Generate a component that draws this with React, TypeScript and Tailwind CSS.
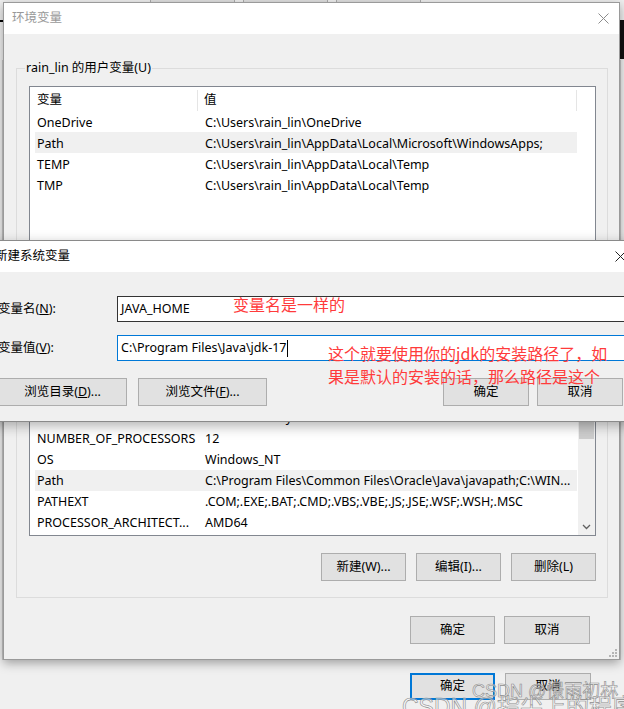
import React from 'react'

const ui = "font-['Noto_Sans','Noto_Sans_CJK_SC',sans-serif]"

type Row = { name: string; value: string; selected?: boolean }

const userVars: Row[] = [
  { name: 'OneDrive', value: 'C:\\Users\\rain_lin\\OneDrive' },
  { name: 'Path', value: 'C:\\Users\\rain_lin\\AppData\\Local\\Microsoft\\WindowsApps;', selected: true },
  { name: 'TEMP', value: 'C:\\Users\\rain_lin\\AppData\\Local\\Temp' },
  { name: 'TMP', value: 'C:\\Users\\rain_lin\\AppData\\Local\\Temp' },
]

const systemVars: Row[] = [
  { name: 'asl.log', value: 'Destination=file' },
  { name: 'ComSpec', value: 'C:\\Windows\\system32\\cmd.exe' },
  { name: 'DriverData', value: 'C:\\Windows\\System32\\Drivers\\DriverData' },
  { name: 'NUMBER_OF_PROCESSORS', value: '12' },
  { name: 'OS', value: 'Windows_NT' },
  { name: 'Path', value: 'C:\\Program Files\\Common Files\\Oracle\\Java\\javapath;C:\\WIN...', selected: true },
  { name: 'PATHEXT', value: '.COM;.EXE;.BAT;.CMD;.VBS;.VBE;.JS;.JSE;.WSF;.WSH;.MSC' },
  { name: 'PROCESSOR_ARCHITECT...', value: 'AMD64' },
]

function CloseX({ color = '#6b6b6b' }: { color?: string }) {
  return (
    <svg width="11" height="11" viewBox="0 0 11 11">
      <path d="M0.5 0.5 L10.5 10.5 M10.5 0.5 L0.5 10.5" stroke={color} strokeWidth="1" fill="none" />
    </svg>
  )
}

function Button({ children, className = '' }: { children: React.ReactNode; className?: string }) {
  return (
    <div
      className={`h-[28px] flex items-center justify-center bg-[#e1e1e1] border border-[#adadad] text-black ${className}`}
    >
      {children}
    </div>
  )
}

function VarList({ rows, height, scroll }: { rows: Row[]; height: number; scroll?: boolean }) {
  return (
    <div className="border border-[#828790] bg-white flex overflow-hidden" style={{ height }}>
      <div className="w-[547px] shrink-0">
        {/* header */}
        <div className="h-[24px] flex items-center pt-[3px]">
          <div className="w-[168px] h-full pl-[7px] flex items-center border-r border-[#e5e5e5]">变量</div>
          <div className="flex-1 h-full pl-[6px] flex items-center border-r border-[#e5e5e5]">值</div>
        </div>
        {rows.map((r) => (
          <div
            key={r.name + r.value}
            className={`ml-[5px] w-[542px] h-[21px] flex items-center whitespace-nowrap ${scroll ? 'pt-[1px]' : 'pt-[3px]'} ${r.selected ? 'bg-[#f0f0f0]' : ''}`}
          >
            <div className="w-[163px] shrink-0 pl-[2px] overflow-visible">{r.name}</div>
            <div className="pl-[7px]">{r.value}</div>
          </div>
        ))}
      </div>
      {scroll && (
        <div className="w-[17px] ml-[1px] flex flex-col bg-[#f0f0f0]">
          <div className="h-[17px]" />
          <div className="h-[81px] mx-[1px] bg-[#cdcdcd]" />
          <div className="flex-1" />
          <div className="h-[17px] flex items-center justify-center">
            <svg width="9" height="6" viewBox="0 0 9 6">
              <path d="M1 1 L4.5 4.5 L8 1" stroke="#606060" strokeWidth="1.3" fill="none" />
            </svg>
          </div>
        </div>
      )}
    </div>
  )
}

function GroupBox({ label, height, children }: { label?: string; height: number; children: React.ReactNode }) {
  return (
    <div className="relative border border-[#dcdcdc] px-[12px] pt-[17px] pr-[11px]" style={{ height }}>
      {label && (
        <div className="absolute left-[8px] top-[-9px] px-[1px] bg-[#f0f0f0] leading-[16px]">{label}</div>
      )}
      {children}
    </div>
  )
}

function EnvWindow() {
  return (
    <div className="absolute left-[3px] top-[2px] w-[617px] h-[658px] border border-[#9a9a9a] bg-[#f0f0f0] shadow-[0_3px_10px_rgba(0,0,0,0.35)] flex flex-col">
      <div className="h-[31px] shrink-0 bg-white flex items-center justify-between pl-[8px] pr-[10px] text-[#999999]">
        <span>环境变量</span>
        <CloseX color="#8c8c8c" />
      </div>
      <div className="pl-[12px] pr-[11px] pt-[34px]">
        <GroupBox label="rain_lin 的用户变量(U)" height={232}>
          <VarList rows={userVars} height={164} />
        </GroupBox>
        <div className="mt-[22px]">
          <GroupBox label="系统变量(S)" height={276}>
            <VarList rows={systemVars} height={196} scroll />
            <div className="flex justify-end gap-[10px] mt-[17px]">
              <Button className="w-[85px]">新建(W)...</Button>
              <Button className="w-[85px]">编辑(I)...</Button>
              <Button className="w-[85px]">删除(L)</Button>
            </div>
          </GroupBox>
        </div>
        <div className="flex justify-end gap-[9px] mt-[18px] pr-[18px]">
          <Button className="w-[85px]">确定</Button>
          <Button className="w-[86px]">取消</Button>
        </div>
      </div>
      <div className="absolute right-[2px] bottom-[2px]">
        <svg width="8" height="8" viewBox="0 0 8 8" fill="#b5b5b5">
          <rect x="6" y="0" width="2" height="2" />
          <rect x="3" y="3" width="2" height="2" />
          <rect x="6" y="3" width="2" height="2" />
          <rect x="0" y="6" width="2" height="2" />
          <rect x="3" y="6" width="2" height="2" />
          <rect x="6" y="6" width="2" height="2" />
        </svg>
      </div>
    </div>
  )
}

function NewVarDialog() {
  return (
    <div className="absolute left-[-11px] top-[240px] w-[656px] h-[182px] border border-[#8a8a8a] bg-[#f0f0f0] shadow-[0_4px_12px_rgba(0,0,0,0.3)] flex flex-col">
      <div className="h-[31px] shrink-0 bg-white flex items-center justify-between pl-[5px] pr-[18px]">
        <span>新建系统变量</span>
        <CloseX color="#222" />
      </div>
      <div className="pl-[8px] pr-[11px] pt-[24px]">
        <div className="flex items-center">
          <div className="w-[119px]">
            变量名(<span className="underline">N</span>):
          </div>
          <div className="flex-1 h-[26px] border border-[#333333] bg-white pl-[3px] flex items-center">JAVA_HOME</div>
        </div>
        <div className="flex items-center mt-[13px]">
          <div className="w-[119px]">
            变量值(<span className="underline">V</span>):
          </div>
          <div className="flex-1 h-[26px] border border-[#0078d7] bg-white pl-[3px] flex items-center">
            C:\Program Files\Java\jdk-17
            <span className="inline-block w-[1px] h-[17px] bg-black ml-[1px]" />
          </div>
        </div>
        <div className="flex items-center mt-[17px] pr-[10px]">
          <Button className="w-[129px]">
            浏览目录(<span className="underline">D</span>)...
          </Button>
          <Button className="w-[129px] ml-[11px]">
            浏览文件(<span className="underline">F</span>)...
          </Button>
          <div className="flex-1" />
          <Button className="w-[86px]">确定</Button>
          <Button className="w-[86px] ml-[8px]">取消</Button>
        </div>
      </div>
    </div>
  )
}

export default function App() {
  return (
    <div className={`relative w-[624px] h-[709px] overflow-hidden bg-[#f0f0f0] text-[12.5px] text-black ${ui}`}>
      {/* back window scraps */}
      <div className="absolute top-[-24px] left-[150px] flex gap-[8px]">
        <Button className="w-[85px]">新建(W)...</Button>
        <Button className="w-[85px]">编辑(I)...</Button>
        <Button className="w-[85px]">删除(L)</Button>
      </div>
      <div className="absolute left-0 top-[20px] w-[3px] h-[2px] bg-black" />
      <div className="absolute right-0 top-[20px] w-[4px] h-[39px] bg-[#111]" />
      <div className="absolute left-0 top-[60px] w-[3px] h-[600px] border-r border-[#c8c8c8]" />
      <div className="absolute right-0 top-[60px] w-[4px] h-[600px] border-l border-[#c8c8c8]" />
      <div className="absolute left-[410px] top-[673px] flex gap-[10px]">
        <div className="w-[85px] h-[27px] border-2 border-[#0078d7] bg-[#e1e1e1] flex items-center justify-center">确定</div>
        <div className="w-[86px] h-[27px] border border-[#adadad] bg-[#e1e1e1] flex items-center justify-center">取消</div>
      </div>

      <EnvWindow />
      <NewVarDialog />

      {/* red annotations */}
      <div className="absolute left-[233px] top-[293px] text-[16px] leading-[23px] text-[#ff3b3b] whitespace-nowrap font-['Noto_Sans_CJK_SC',sans-serif]">
        变量名是一样的
      </div>
      <div className="absolute left-[328px] top-[342px] text-[16px] leading-[23px] text-[#ff3b3b] whitespace-nowrap font-['Noto_Sans_CJK_SC',sans-serif]">
        这个就要使用你的jdk的安装路径了，如
        <br />
        果是默认的安装的话，那么路径是这个
      </div>

      {/* watermarks */}
      <div className="absolute left-[472px] top-[680px] text-[18px] leading-[22px] text-white/50 [-webkit-text-stroke:0.6px_#8c8c8c] whitespace-nowrap font-['Liberation_Sans','Noto_Sans_CJK_SC',sans-serif]">
        CSDN @憬雨初林
      </div>
      <div className="absolute left-[402px] top-[693px] text-[23px] leading-[28px] text-white/50 [-webkit-text-stroke:0.6px_#8c8c8c] whitespace-nowrap font-['Liberation_Sans','Noto_Sans_CJK_SC',sans-serif]">
        CSDN @指尖上的程序员
      </div>
    </div>
  )
}
